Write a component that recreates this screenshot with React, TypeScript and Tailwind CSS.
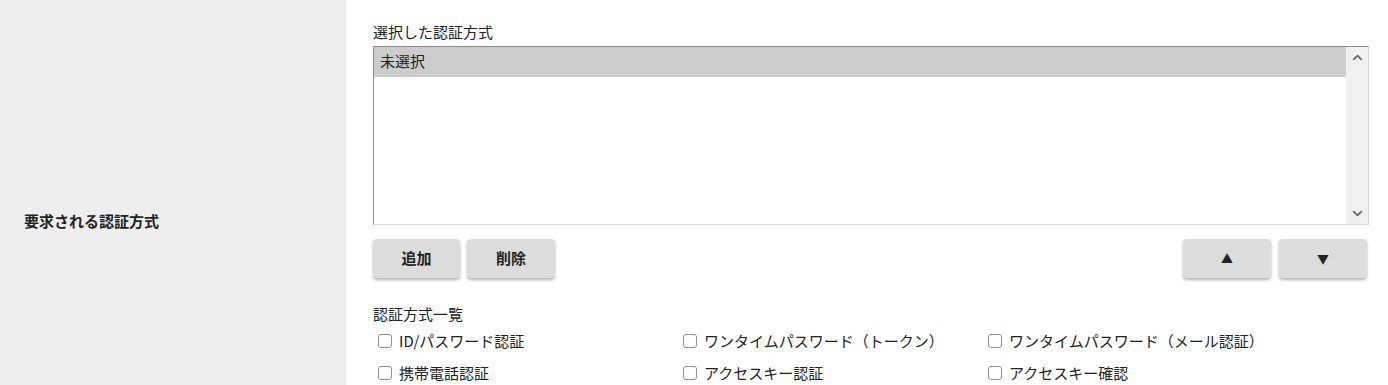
import { ChevronDown, ChevronUp } from "lucide-react";

const methods = [
  "ID/パスワード認証",
  "ワンタイムパスワード（トークン）",
  "ワンタイムパスワード（メール認証）",
  "携帯電話認証",
  "アクセスキー認証",
  "アクセスキー確認",
];

function GrayButton({ label, className = "" }: { label: string; className?: string }) {
  return (
    <button
      className={`h-[39px] rounded-[4px] bg-[#dcdcdc] font-bold text-[#222] shadow-[0_2px_3px_rgba(0,0,0,0.3)] ${className}`}
    >
      {label}
    </button>
  );
}

function App() {
  return (
    <div
      className="flex w-[1388px] h-[385px] overflow-hidden bg-white text-[#222]"
      style={{ fontFamily: '"Noto Sans CJK JP", "Noto Sans", sans-serif' }}
    >
      <div className="w-[346px] shrink-0 h-[442px] bg-[#eeeeee] flex items-center pl-6">
        <span className="text-[15px] font-bold">要求される認証方式</span>
      </div>

      <div className="flex-1 pl-[27px] pr-[19px] pt-[21px]">
        <div className="text-[15px] leading-[22px]">選択した認証方式</div>

        <div className="mt-[3px] h-[179px] flex border border-[#d8d8d8] border-t-[#8c8c8c] border-l-[#8c8c8c]">
          <div className="flex-1">
            <div className="h-[30px] bg-[#cccccc] pl-[6px] text-[15px] leading-[28px]">未選択</div>
          </div>
          <div className="w-[22px] bg-[#f0f0f0] flex flex-col justify-between items-center py-[3px]">
            <ChevronUp size={15} strokeWidth={3} className="text-[#6a6a6a]" />
            <ChevronDown size={15} strokeWidth={3} className="text-[#6a6a6a]" />
          </div>
        </div>

        <div className="mt-[14px] flex items-center">
          <GrayButton label="追加" className="w-[87px] text-[15px]" />
          <GrayButton label="削除" className="w-[88px] ml-[7px] text-[15px]" />
          <div className="flex-1" />
          <GrayButton label="▲" className="w-[88px] text-[12px]" />
          <GrayButton label="▼" className="w-[88px] ml-[8px] mr-[2px] text-[12px]" />
        </div>

        <div className="mt-[25px] text-[15px] leading-[22px]">認証方式一覧</div>

        <div className="grid grid-cols-[305px_305px_305px] pl-[5px]">
          {methods.map((m) => (
            <label key={m} className="flex items-center h-[32px] text-[15px]">
              <span className="w-[14px] h-[14px] rounded-[3px] border-[1.5px] border-[#8e8e9a] bg-white" />
              <span className="ml-[7px]">{m}</span>
            </label>
          ))}
        </div>
      </div>
    </div>
  );
}

export default App;
